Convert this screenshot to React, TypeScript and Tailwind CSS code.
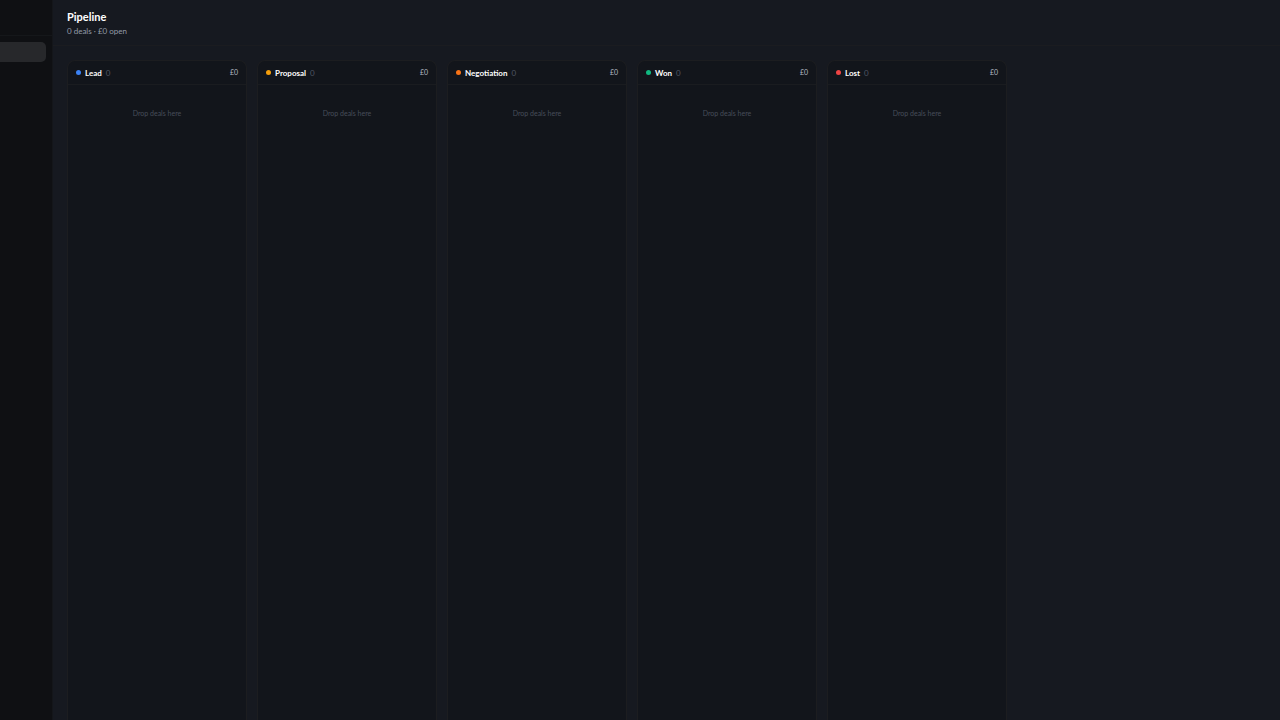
const stages = [
  { id: "lead", name: "Lead", dot: "bg-[#3b82f6]", count: 0, total: 0 },
  { id: "proposal", name: "Proposal", dot: "bg-[#f59e0b]", count: 0, total: 0 },
  { id: "negotiation", name: "Negotiation", dot: "bg-[#f97316]", count: 0, total: 0 },
  { id: "won", name: "Won", dot: "bg-[#10b981]", count: 0, total: 0 },
  { id: "lost", name: "Lost", dot: "bg-[#ef4444]", count: 0, total: 0 },
];

type Stage = (typeof stages)[number];

const Sidebar = () => (
  <aside className="w-[53px] shrink-0 bg-[#0f1013] border-r border-[#14161a]">
    <div className="h-9 border-b border-[#15171a]" />
    <nav className="pt-[6px] pr-[6px]">
      <a
        href="#pipeline"
        aria-current="page"
        aria-label="Pipeline"
        className="block h-5 rounded-r-[5px] bg-[#27282b]"
      />
    </nav>
  </aside>
);

const Column = ({ stage }: { stage: Stage }) => (
  <section className="w-[180px] shrink-0 flex flex-col rounded-t-lg border border-b-0 border-[#1c1d20] bg-[#12151b]">
    <header className="flex items-center h-6 px-2 border-b border-[#1a1c20]">
      <span className={`w-[5px] h-[5px] mr-1 rounded-full ${stage.dot}`} />
      <h2 className="text-[8px] font-bold text-white">{stage.name}</h2>
      <span className="ml-1 text-[8px] text-[#4f5663]">{stage.count}</span>
      <span className="ml-auto text-[7px] text-[#b4bac5]">£{stage.total}</span>
    </header>
    <p className="pt-[23px] text-center text-[7px] leading-[10px] text-[#474d5a]">
      Drop deals here
    </p>
  </section>
);

const App = () => (
  <div className="flex h-screen overflow-hidden bg-[#161920] font-['Lato','Open_Sans',sans-serif]">
    <Sidebar />
    <main className="flex flex-col flex-1 min-w-0">
      <header className="h-[46px] shrink-0 px-[14px] pt-[9px] border-b border-[#1b1c20]">
        <h1 className="text-[11px] leading-4 font-bold text-white">
          Pipeline
        </h1>
        <p className="text-[8px] leading-3 text-[#949ba7]">0 deals · £0 open</p>
      </header>
      <div className="flex flex-1 min-h-0 gap-[10px] px-[14px] pt-[14px]">
        {stages.map((stage) => (
          <Column key={stage.id} stage={stage} />
        ))}
      </div>
    </main>
  </div>
);

export default App;
